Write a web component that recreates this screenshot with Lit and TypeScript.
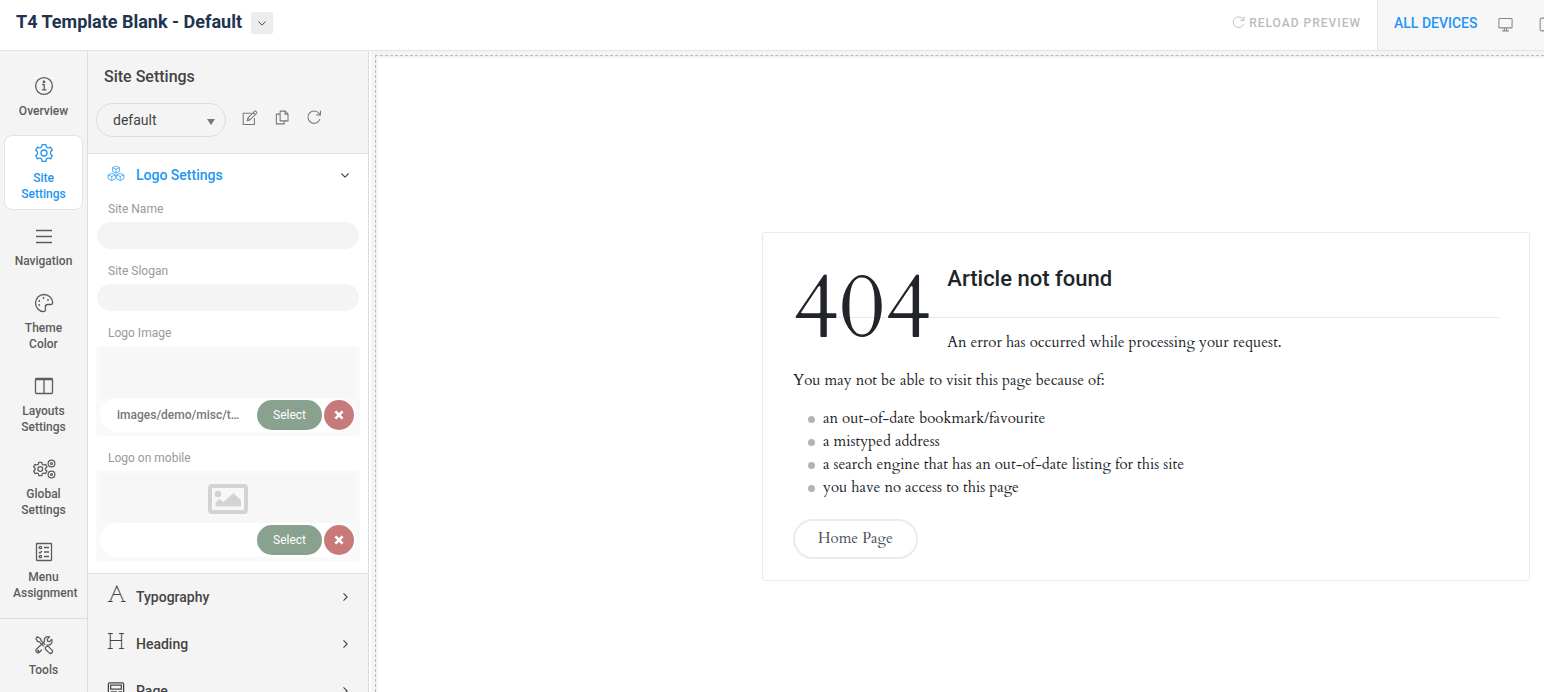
import { LitElement, html, svg, css, nothing } from "lit";
import { customElement, property, state } from "lit/decorators.js";
import { classMap } from "lit/directives/class-map.js";

const gearPath =
  "M8.100 1.600h3.800l.5 2.400 1.700 1 2.400-.8 1.800 3.100-1.800 1.700v2l1.800 1.700-1.800 3.100-2.400-.8-1.700 1-.5 2.400H8.100l-.5-2.400-1.700-1-2.400.8-1.800-3.100L3.500 11V9L1.700 7.300l1.800-3.100 2.400.8 1.700-1z";

const icons: Record<string, unknown> = {
  info: svg`<circle cx="10" cy="10" r="8.400"/><path d="M8.200 8.500h2v5.300M8 13.800h4.400"/><circle cx="10" cy="5.800" r=".7" fill="currentColor"/>`,
  gear: svg`<path d="${gearPath}"/><circle cx="10" cy="10" r="3"/>`,
  menu: svg`<path d="M2 4.500h16M2 10.500h16M2 16.500h16"/>`,
  palette: svg`<path d="M10 1.500c4.800 0 8.700 3.700 8.700 8.200 0 1.200-.6 1.800-1.700 1.800h-3.200c-1.600 0-2.400.8-2.400 2.200v3.200c0 1.200-.6 1.700-1.800 1.700-4.600-.2-8.100-4-8.100-8.600 0-4.700 3.800-8.500 8.500-8.500z"/><g fill="currentColor" stroke="none"><circle cx="5.200" cy="12" r=".9"/><circle cx="5.300" cy="8" r=".9"/><circle cx="9.500" cy="5" r=".9"/><circle cx="14" cy="7" r=".9"/></g>`,
  columns: svg`<rect x="1.500" y="2.500" width="17" height="15" rx="1"/><path d="M1.500 3.500h17M10 3.500v14"/>`,
  gears: svg`<g transform="translate(.3 2) scale(.8)"><path stroke-width="1.600" d="${gearPath}"/><circle cx="10" cy="10" r="3" stroke-width="1.600"/></g><g stroke-width="1.200"><circle cx="19.500" cy="4.500" r="3.400"/><circle cx="19.500" cy="4.500" r="1"/><circle cx="19.500" cy="15.500" r="3.400"/><circle cx="19.500" cy="15.500" r="1"/></g>`,
  checklist: svg`<rect x="2.500" y="1.500" width="15" height="17" rx=".5"/><path d="M10 5.500h5M10 10h5M10 14.500h5M5 10l1 1 2-2"/><circle cx="6.400" cy="5.500" r="1.200"/><circle cx="6.400" cy="14.500" r="1.200"/>`,
  tools: svg`<path d="M1.800 3.400 3.400 1.800l3 1.700.5 1.900 4.300 4.300M9.700 11.200 5.400 6.900l-1.900-.5-1.700-3M11.200 12.800l1.600-1.600 1.500.2 3.700 3.700c1.600 1.700-1 4.400-2.800 2.800l-3.700-3.700z"/><path d="M17.800 4.300 15.400 6.600l-1.900-.4-.3-1.800 2.400-2.500c-3.200-1.200-6.200 1.500-5.200 4.700l-8 7.600c-1.700 2 1 4.800 3 3l2.500-2.600M12.700 10c3.600.9 6.300-2.300 5.100-5.700"/><circle cx="4.200" cy="15.900" r=".5"/>`,
  edit: svg`<path d="M12 4H1.500v14h14V10"/><path d="m6.500 13.500.9-3.600 8.300-8.300c1.300-.9 3.400 1.200 2.500 2.500L9.900 12.500zM14 3.300l2.600 2.600M7.400 9.900l2.500 2.600"/>`,
  copy: svg`<path d="M7.500 1.500h7l3.500 3.500v9.500H7.500zM14 1.500v4h4M7.500 5.500H2.500v13h10.500v-4"/>`,
  reload: svg`<path d="M17.900 12.200a8.200 8.200 0 1 1-1.300-7.700l1.600 1.900M18.600 1v5.700h-5.700"/>`,
  cubes: svg`<path d="m10 1.200 3.800 1.700v4.300L10 9 6.200 7.200V2.900zM6.200 2.900 10 4.700l3.800-1.800M10 4.700V9M5.300 9.200l4 1.800v4.400l-4 1.900-4-1.900V11zM1.300 11l4 1.800 4-1.800M5.300 12.800v4.500M14.700 9.200l4 1.800v4.400l-4 1.900-4-1.900V11zM10.700 11l4 1.800 4-1.800M14.700 12.800v4.500"/>`,
  page: svg`<rect x="1.500" y="2" width="17" height="17" rx="1.500"/><rect x="4" y="4.500" width="12" height="4.500"/><path d="M4 12h7M4 15h7M13.500 12H16v4h-2.500z"/>`,
  down: svg`<path d="m4 7.500 6 6 6-6"/>`,
  right: svg`<path d="m7.500 4 6 6-6 6"/>`,
  monitor: svg`<rect x="1.200" y="2" width="17.600" height="12.500" rx="1"/><path d="M8.500 14.500v3.500M11.500 14.500v3.500M5.500 18.500h9"/>`,
  tablet: svg`<rect x="1.500" y="1.500" width="13" height="17" rx="2"/><path d="M7 16h2"/>`,
  cross: svg`<path d="m4 4 12 12M16 4 4 16"/>`,
  image: svg`<rect x="2" y="2" width="36" height="26" rx="2" stroke-width="4"/><circle cx="10" cy="10" r="3.200" fill="currentColor" stroke="none"/><path fill="currentColor" stroke="none" d="M7.500 22.500v-4l4-3.500 4 3 10-9 7.500 7.500v6z"/>`,
};

const glyph = (name: string, size: number, stroke = 1.2, vw = 20, vh = 20) => html`<svg
  class="glyph"
  width=${(size * vw) / vh}
  height=${size}
  viewBox="0 0 ${vw} ${vh}"
  fill="none"
  stroke="currentColor"
  stroke-width=${stroke}
  stroke-linejoin="round"
  aria-hidden="true"
>${icons[name]}</svg>`;

const base = css`
  *,
  *::before,
  *::after {
    box-sizing: border-box;
  }
  button,
  input,
  select {
    font: inherit;
    color: inherit;
    margin: 0;
    border: 0;
    padding: 0;
    background: none;
  }
  button {
    cursor: pointer;
  }
  a {
    color: inherit;
    text-decoration: none;
  }
  .glyph {
    display: block;
    flex: none;
  }
`;

@customElement("top-bar")
class TopBar extends LitElement {
  static styles = [
    base,
    css`
      :host {
        display: flex;
        flex: none;
        height: 51px;
        border-bottom: 1px solid #e3e3e3;
        background: #fff;
      }
      .title {
        display: flex;
        flex: 1;
        align-items: center;
        gap: 9px;
        padding: 0 16px 6px;
      }
      h1 {
        margin: 0;
        font-size: 18px;
        line-height: 24px;
        font-weight: 700;
        color: #20344f;
      }
      .switch {
        display: grid;
        place-items: center;
        width: 22px;
        height: 22px;
        border-radius: 2px;
        background: #ededed;
        color: #444;
        margin-top: 2px;
      }
      .reload {
        display: flex;
        align-items: center;
        gap: 4px;
        padding: 0 16px 5px 0;
        font-size: 12px;
        font-weight: 500;
        letter-spacing: 1px;
        text-transform: uppercase;
        color: #bbb;
      }
      .devices {
        display: flex;
        flex: none;
        align-items: center;
        width: 167px;
        overflow: hidden;
        padding: 0 0 5px 16px;
        border-left: 1px solid #e3e3e3;
        background: #f7f7f7;
        color: #888;
      }
      .devices button {
        flex: none;
      }
      .devices .glyph {
        margin-top: 3px;
      }
      .all {
        margin-right: 21px;
        font-size: 14px;
        font-weight: 500;
        text-transform: uppercase;
        color: #2196f3;
      }
      .screen {
        margin-right: 26px;
      }
    `,
  ];

  render() {
    return html`
      <div class="title">
        <h1>T4 Template Blank - Default</h1>
        <button class="switch" aria-label="Switch template">${glyph("down", 12, 1.6)}</button>
      </div>
      <button class="reload">${glyph("reload", 13, 1.5)}<span>Reload preview</span></button>
      <nav class="devices" aria-label="Devices">
        <button class="all">All devices</button>
        <button class="screen" aria-label="Desktop">${glyph("monitor", 15, 1.4)}</button>
        <button aria-label="Tablet">${glyph("tablet", 15, 1.4, 16, 20)}</button>
      </nav>
    `;
  }
}

interface NavItem {
  label: string;
  icon: string;
  wide?: boolean;
}

@customElement("side-nav")
class SideNav extends LitElement {
  @state() active = "Site Settings";

  static styles = [
    base,
    css`
      :host {
        display: flex;
        flex-direction: column;
        flex: none;
        width: 88px;
        border-right: 1px solid #dcdcdc;
        background: #f4f4f4;
        overflow: hidden;
      }
      .group {
        display: flex;
        flex-direction: column;
        gap: 8px;
        padding: 17px 4px 9px;
      }
      .group + .group {
        padding-top: 8px;
        border-top: 1px solid #dcdcdc;
      }
      .item {
        display: flex;
        flex-direction: column;
        align-items: center;
        gap: 7px;
        padding: 7px 8px;
        border: 1px solid transparent;
        border-radius: 8px;
        font-size: 12px;
        line-height: 16px;
        font-weight: 500;
        text-align: center;
        color: #5c5c5c;
      }
      .label {
        width: 100%;
      }
      .active {
        border-color: #e3e3e3;
        background: #fff;
        color: #2196f3;
      }
    `,
  ];

  private entry(item: NavItem) {
    return html`<a
      href="#"
      class=${classMap({ item: true, active: item.label === this.active })}
      @click=${(e: Event) => {
        e.preventDefault();
        this.active = item.label;
      }}
      >${glyph(item.icon, 20, 1.3, item.wide ? 24 : 20)}<span class="label">${item.label}</span></a
    >`;
  }

  render() {
    const main: NavItem[] = [
      { label: "Overview", icon: "info" },
      { label: "Site Settings", icon: "gear" },
      { label: "Navigation", icon: "menu" },
      { label: "Theme Color", icon: "palette" },
      { label: "Layouts Settings", icon: "columns" },
      { label: "Global Settings", icon: "gears", wide: true },
      { label: "Menu Assignment", icon: "checklist" },
    ];
    return html`
      <nav class="group">${main.map((i) => this.entry(i))}</nav>
      <nav class="group">${this.entry({ label: "Tools", icon: "tools" })}</nav>
    `;
  }
}

@customElement("media-field")
class MediaField extends LitElement {
  @property() label = "";
  @property() value = "";

  static styles = [
    base,
    css`
      :host {
        display: block;
      }
      .label {
        display: block;
        padding: 0 12px;
        margin-bottom: 5px;
        font-size: 12px;
        line-height: 16px;
        color: #999;
      }
      .box {
        padding: 3px 4px 4px;
        border-radius: 4px;
        background: #f9f9f9;
      }
      .preview {
        display: grid;
        place-items: center;
        height: 49px;
        background: #f7f7f7;
        color: #d3d3d3;
      }
      .row {
        display: flex;
        align-items: center;
        gap: 2px;
        height: 34px;
        padding-right: 2px;
        border-radius: 17px;
        background: #fff;
      }
      .path {
        flex: 1;
        min-width: 0;
        height: 30px;
        padding: 0 12px 0 17px;
        font-size: 12px;
        font-weight: 500;
        color: #777;
        text-overflow: ellipsis;
        outline: 0;
      }
      .pick,
      .clear {
        height: 30px;
        border-radius: 15px;
        color: #fff;
      }
      .pick {
        width: 65px;
        font-size: 12px;
        background: #88a28f;
      }
      .clear {
        display: grid;
        place-items: center;
        width: 30px;
        background: #c87a7a;
      }
    `,
  ];

  render() {
    return html`
      <label class="label" for="path">${this.label}</label>
      <div class="box">
        <div class="preview">${this.value ? nothing : glyph("image", 30, 1, 40, 30)}</div>
        <div class="row">
          <input class="path" id="path" type="text" readonly .value=${this.value} />
          <button class="pick">Select</button>
          <button class="clear" aria-label="Clear">${glyph("cross", 12, 4.4)}</button>
        </div>
      </div>
    `;
  }
}

@customElement("settings-panel")
class SettingsPanel extends LitElement {
  static styles = [
    base,
    css`
      :host {
        display: flex;
        flex-direction: column;
        flex: none;
        width: 281px;
        border-right: 1px solid #dcdcdc;
        background: #f4f4f4;
        color: #444;
        overflow: hidden;
      }
      .head {
        flex: none;
        padding: 16px 8px;
        border-bottom: 1px solid #e0e0e0;
      }
      h2 {
        margin: 0 8px 16px;
        font-size: 16px;
        line-height: 20px;
        font-weight: 500;
      }
      .profile {
        display: flex;
        align-items: center;
        gap: 16px;
        color: #777;
      }
      .choice {
        display: grid;
        align-items: center;
        width: 130px;
      }
      .choice select,
      .choice .caret {
        grid-area: 1 / 1;
      }
      .choice select {
        appearance: none;
        height: 34px;
        padding: 0 16px;
        border: 1px solid #dcdcdc;
        border-radius: 17px;
        font-size: 14px;
        color: #444;
      }
      .caret {
        justify-self: end;
        margin: 3px 11px 0 0;
        border: 4px solid transparent;
        border-top: 6px solid #777;
        border-bottom: 0;
        pointer-events: none;
      }
      .action {
        margin-bottom: 5px;
      }
      .action .glyph {
        width: 16px;
      }
      .section {
        display: flex;
        flex: none;
        align-items: center;
        gap: 12px;
        width: 100%;
        height: 47px;
        padding: 0 17px 2px 19px;
        font-size: 14px;
        font-weight: 500;
        text-align: left;
      }
      .section .name {
        flex: 1;
      }
      .section .sign {
        display: grid;
        place-items: center;
        width: 17px;
        height: 20px;
        margin-bottom: 2px;
      }
      .letter {
        font-family: "Josefin Slab", "Liberation Serif", serif;
        font-size: 24px;
        line-height: 20px;
        font-weight: 400;
      }
      .open {
        flex: none;
        padding-bottom: 12px;
        border-bottom: 1px solid #e0e0e0;
        background: #fff;
      }
      .open .section {
        height: 43px;
        color: #2196f3;
      }
      .open .arrow {
        color: #444;
      }
      .fields {
        display: flex;
        flex-direction: column;
        gap: 14px;
        padding: 4px 8px 0;
      }
      .field label {
        display: block;
        padding: 0 12px;
        margin-bottom: 5px;
        font-size: 12px;
        line-height: 16px;
        color: #999;
      }
      .field input {
        display: block;
        width: calc(100% - 2px);
        height: 27px;
        margin: 0 1px;
        padding: 0 16px;
        border-radius: 14px;
        background: #f4f4f4;
        font-size: 12px;
      }
    `,
  ];

  private section(name: string, sign: unknown) {
    return html`<button class="section">
      <span class="sign">${sign}</span><span class="name">${name}</span>${glyph("right", 12, 1.8)}
    </button>`;
  }

  render() {
    return html`
      <header class="head">
        <h2>Site Settings</h2>
        <div class="profile">
          <div class="choice">
            <select aria-label="Profile">
              <option>default</option>
            </select>
            <span class="caret"></span>
          </div>
          <button class="action" aria-label="Edit">${glyph("edit", 16, 1.3)}</button>
          <button class="action" aria-label="Duplicate">${glyph("copy", 15, 1.4)}</button>
          <button class="action" aria-label="Restore">${glyph("reload", 15, 1.4)}</button>
        </div>
      </header>
      <section class="open">
        <button class="section" aria-expanded="true">
          <span class="sign">${glyph("cubes", 18, 0.8)}</span><span class="name">Logo Settings</span
          ><span class="arrow">${glyph("down", 12, 1.8)}</span>
        </button>
        <div class="fields">
          <div class="field">
            <label for="site-name">Site Name</label>
            <input id="site-name" type="text" />
          </div>
          <div class="field">
            <label for="site-slogan">Site Slogan</label>
            <input id="site-slogan" type="text" />
          </div>
          <media-field label="Logo Image" value="images/demo/misc/t4-logo.png"></media-field>
          <media-field label="Logo on mobile"></media-field>
        </div>
      </section>
      ${this.section("Typography", html`<span class="letter">A</span>`)}
      ${this.section("Heading", html`<span class="letter">H</span>`)}
      ${this.section("Page", glyph("page", 18, 1.4))}
    `;
  }
}

@customElement("site-preview")
class SitePreview extends LitElement {
  static styles = [
    base,
    css`
      :host {
        display: block;
        flex: 1;
        min-width: 0;
        overflow: hidden;
        padding: 4px 0 0 4px;
        border-left: 2px solid #fff;
        background: #f4f4f4;
      }
      .frame {
        height: 100%;
        padding: 2px 0 0 2px;
        border: 1px dashed #bbb;
        border-width: 1px 0 0 1px;
      }
      .page {
        display: flex;
        justify-content: flex-end;
        align-items: flex-start;
        height: 100%;
        padding: 174px 14px 0;
        background: #fff;
        font-family: Cardo, "Liberation Serif", serif;
        font-size: 15px;
        line-height: 23px;
        color: #212529;
      }
      .card {
        width: 100%;
        max-width: 768px;
        padding: 30px 30px 21px;
        border: 1px solid #e9e9e9;
        border-radius: 3px;
      }
      .summary {
        display: grid;
        grid-template-columns: auto 1fr;
        column-gap: 16px;
      }
      .code {
        grid-column: 1;
        grid-row: 1 / 4;
        z-index: 1;
        font-size: 90px;
        line-height: 90px;
      }
      h3 {
        grid-column: 2;
        margin: 0 0 23px;
        padding-top: 1px;
        font-family: Roboto, sans-serif;
        font-size: 22px;
        line-height: 30px;
        font-weight: 500;
      }
      hr {
        grid-column: 1 / 3;
        grid-row: 2;
        width: 100%;
        margin: 0 0 13px;
        border: 0;
        border-top: 1px solid #e9e9e9;
      }
      p {
        margin: 0 0 15px;
      }
      .summary p {
        grid-column: 2;
      }
      ul {
        margin: 0 0 20px;
        padding: 0;
        list-style: none;
      }
      li {
        display: flex;
        align-items: center;
        gap: 8px;
        padding-left: 15px;
      }
      li::before {
        content: "";
        width: 7px;
        height: 7px;
        margin-top: 2px;
        border-radius: 50%;
        background: #adb5bd;
      }
      .home {
        display: inline-block;
        padding: 6px 23px 7px;
        border: 2px solid #e9ecef;
        border-radius: 20px;
        color: #495057;
      }
    `,
  ];

  render() {
    const reasons = [
      "an out-of-date bookmark/favourite",
      "a mistyped address",
      "a search engine that has an out-of-date listing for this site",
      "you have no access to this page",
    ];
    return html`
      <div class="frame">
        <main class="page">
          <article class="card">
            <div class="summary">
              <div class="code">404</div>
              <h3>Article not found</h3>
              <hr />
              <p>An error has occurred while processing your request.</p>
            </div>
            <p>You may not be able to visit this page because of:</p>
            <ul>
              ${reasons.map((r) => html`<li>${r}</li>`)}
            </ul>
            <a class="home" href="#">Home Page</a>
          </article>
        </main>
      </div>
    `;
  }
}

@customElement("app-root")
class AppRoot extends LitElement {
  static styles = [
    base,
    css`
      :host {
        display: flex;
        flex-direction: column;
        height: 100vh;
        overflow: hidden;
        font-family: Roboto, "Liberation Sans", sans-serif;
        background: #fff;
      }
      .body {
        display: flex;
        flex: 1;
        min-height: 0;
      }
    `,
  ];

  render() {
    return html`
      <top-bar></top-bar>
      <div class="body">
        <side-nav></side-nav>
        <settings-panel></settings-panel>
        <site-preview></site-preview>
      </div>
    `;
  }
}
